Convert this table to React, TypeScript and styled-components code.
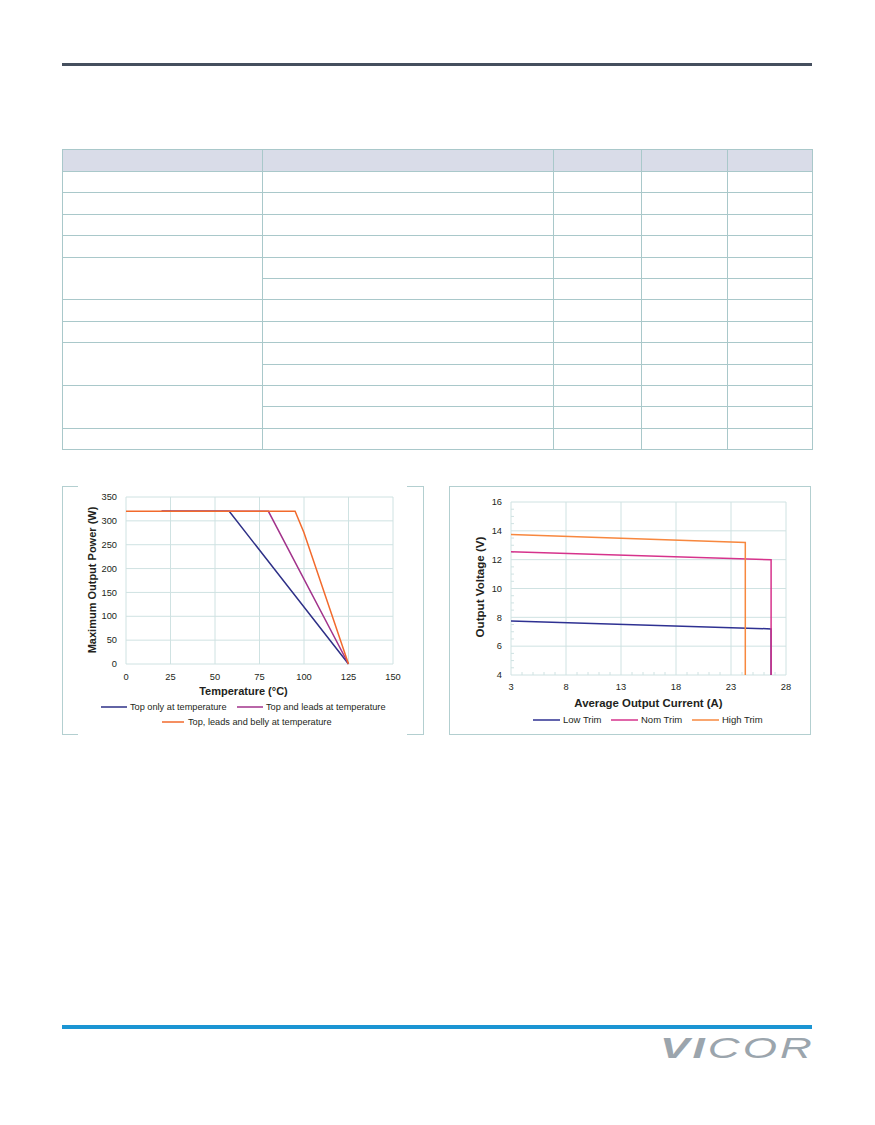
import React from 'react'
import styled, { createGlobalStyle } from 'styled-components'

const GlobalStyle = createGlobalStyle`
  html, body {
    margin: 0;
    padding: 0;
    background: #ffffff;
  }
  body {
    font-family: 'Liberation Sans', Arial, sans-serif;
  }
`

const GRID = '#cfe2e2'
const RULE = '#a9c8ca'
const INK = '#231f20'

const Page = styled.div`
  width: 875px;
  height: 1125px;
  box-sizing: border-box;
  padding: 63px 63px 0 62px;
  display: flex;
  flex-direction: column;
`

const TopRule = styled.div`
  height: 3px;
  background: #454f5e;
`

const SpecTable = styled.table`
  margin-top: 83px;
  width: 750px;
  border-collapse: collapse;
  table-layout: fixed;
`

const Col = styled.col<{ $w: number }>`
  width: ${(p) => p.$w}px;
`

const HeadCell = styled.th`
  height: 21px;
  padding: 0;
  border: 1px solid ${RULE};
  background: #d9dce8;
`

const Cell = styled.td`
  height: 20.4px;
  padding: 0;
  border: 1px solid ${RULE};
`

const ChartRow = styled.div`
  margin-top: 36px;
  display: grid;
  grid-template-columns: 362px 362px;
  column-gap: 25px;
`

const BracketPanel = styled.div`
  height: 249px;
  box-sizing: border-box;
  border-left: 1px solid #b3cfd0;
  border-right: 1px solid #b3cfd0;
  background:
    linear-gradient(#b3cfd0, #b3cfd0) left top / 15px 1px no-repeat,
    linear-gradient(#b3cfd0, #b3cfd0) left bottom / 15px 1px no-repeat,
    linear-gradient(#b3cfd0, #b3cfd0) right top / 16px 1px no-repeat,
    linear-gradient(#b3cfd0, #b3cfd0) right bottom / 16px 1px no-repeat;
`

const BoxPanel = styled.div`
  height: 249px;
  box-sizing: border-box;
  border: 1px solid #b3cfd0;
`

const ChartSvg = styled.svg`
  display: block;
  font-family: 'Liberation Sans', Arial, sans-serif;
`

const TickLabel = styled.text`
  font-size: 9.3px;
  fill: ${INK};
`

const AxisTitle = styled.text<{ $size: number }>`
  font-size: ${(p) => p.$size}px;
  font-weight: bold;
  fill: ${INK};
`

const LegendLabel = styled.text<{ $size: number }>`
  font-size: ${(p) => p.$size}px;
  fill: ${INK};
`

const BottomRule = styled.div`
  margin-top: 290px;
  height: 4px;
  background: #1b95d3;
`

const Logo = styled.div`
  align-self: flex-end;
  margin-top: 5px;
  font-family: 'Liberation Sans', Arial, sans-serif;
  font-style: italic;
  font-size: 29px;
  line-height: 29px;
  letter-spacing: 2px;
  color: #9ba5ad;
  transform: scaleX(1.52);
  transform-origin: right center;
`

const LogoHeavy = styled.span`
  font-weight: 900;
`

const LogoLight = styled.span`
  font-weight: 400;
  margin-right: -2px;
`

const rowGroups = [1, 1, 1, 1, 2, 1, 1, 2, 2, 1]
const colWidths = [200, 291, 88, 86, 85]

const Table = () => (
  <SpecTable>
    <colgroup>
      {colWidths.map((w, i) => (
        <Col key={i} $w={w} />
      ))}
    </colgroup>
    <thead>
      <tr>
        {colWidths.map((_, i) => (
          <HeadCell key={i} />
        ))}
      </tr>
    </thead>
    <tbody>
      {rowGroups.map((span, g) =>
        span === 1 ? (
          <tr key={g}>
            {colWidths.map((_, i) => (
              <Cell key={i} />
            ))}
          </tr>
        ) : (
          <React.Fragment key={g}>
            <tr>
              <Cell rowSpan={2} />
              <Cell />
              <Cell />
              <Cell />
              <Cell />
            </tr>
            <tr>
              <Cell />
              <Cell />
              <Cell />
              <Cell />
            </tr>
          </React.Fragment>
        )
      )}
    </tbody>
  </SpecTable>
)

type Pt = [number, number]

// derating chart: temperature vs max power
const px1 = (t: number) => 63 + (t / 150) * 267
const py1 = (p: number) => 178 - (p / 350) * 167
const path = (pts: Pt[], fx: (v: number) => number, fy: (v: number) => number) =>
  pts.map(([a, b], i) => `${i ? 'L' : 'M'}${fx(a).toFixed(1)} ${fy(b).toFixed(1)}`).join(' ')

const derating: { color: string; pts: Pt[] }[] = [
  { color: '#2e3087', pts: [[20, 320], [58, 320], [125, 0]] },
  { color: '#a2338b', pts: [[20, 320], [80, 320], [125, 0]] },
  { color: '#f26a2c', pts: [[0, 320], [95, 320], [100, 275], [125, 0]] },
]

const DeratingChart = () => (
  <ChartSvg width={360} height={249}>
    {[0, 25, 50, 75, 100, 125, 150].map((t) => (
      <line key={`v${t}`} x1={px1(t)} x2={px1(t)} y1={py1(0)} y2={py1(350)} stroke={GRID} />
    ))}
    {[0, 50, 100, 150, 200, 250, 300, 350].map((p) => (
      <line key={`h${p}`} x1={px1(0)} x2={px1(150)} y1={py1(p)} y2={py1(p)} stroke={GRID} />
    ))}
    {[0, 50, 100, 150, 200, 250, 300, 350].map((p) => (
      <TickLabel key={`yl${p}`} x={54} y={py1(p) + 3.2} textAnchor="end">
        {p}
      </TickLabel>
    ))}
    {[0, 25, 50, 75, 100, 125, 150].map((t) => (
      <TickLabel key={`xl${t}`} x={px1(t)} y={194} textAnchor="middle">
        {t}
      </TickLabel>
    ))}
    {derating.map((s) => (
      <path key={s.color} d={path(s.pts, px1, py1)} fill="none" stroke={s.color} strokeWidth={1.5} />
    ))}
    <AxisTitle $size={11} x={180.5} y={209} textAnchor="middle">
      Temperature (°C)
    </AxisTitle>
    <AxisTitle $size={11} transform="translate(29 94) rotate(-90)" textAnchor="middle" dominantBaseline="central">
      Maximum Output Power (W)
    </AxisTitle>
    <line x1={38} x2={64} y1={221} y2={221} stroke="#2e3087" strokeWidth={1.5} />
    <LegendLabel $size={9.2} x={67} y={224.2}>
      Top only at temperature
    </LegendLabel>
    <line x1={174} x2={200} y1={221} y2={221} stroke="#a2338b" strokeWidth={1.5} />
    <LegendLabel $size={9.2} x={203} y={224.2}>
      Top and leads at temperature
    </LegendLabel>
    <line x1={99} x2={121} y1={236} y2={236} stroke="#f26a2c" strokeWidth={1.5} />
    <LegendLabel $size={9.2} x={125} y={239.2}>
      Top, leads and belly at temperature
    </LegendLabel>
  </ChartSvg>
)

// trim chart: output current vs output voltage
const px2 = (a: number) => 61 + ((a - 3) / 25) * 275
const py2 = (v: number) => 188 - ((v - 4) / 12) * 173

const trims: { label: string; color: string; pts: Pt[]; lx: number }[] = [
  { label: 'Low Trim', color: '#2e3192', pts: [[3, 7.75], [26.65, 7.2], [26.65, 4]], lx: 83 },
  { label: 'Nom Trim', color: '#d6338c', pts: [[3, 12.55], [26.65, 12.0], [26.65, 4]], lx: 161 },
  { label: 'High Trim', color: '#f7883f', pts: [[3, 13.75], [24.3, 13.2], [24.3, 4]], lx: 242 },
]

const xMajor = [3, 8, 13, 18, 23, 28]
const yMajor = [4, 6, 8, 10, 12, 14, 16]
const xMinor = Array.from({ length: 26 }, (_, i) => 3 + i).filter((a) => (a - 3) % 5 !== 0)
const yMinor = Array.from({ length: 25 }, (_, i) => 4 + i * 0.5).filter((v) => v % 2 !== 0)

const TrimChart = () => (
  <ChartSvg width={361} height={247}>
    {xMajor.map((a) => (
      <line key={`v${a}`} x1={px2(a)} x2={px2(a)} y1={py2(4)} y2={py2(16)} stroke={GRID} />
    ))}
    {yMajor.map((v) => (
      <line key={`h${v}`} x1={px2(3)} x2={px2(28)} y1={py2(v)} y2={py2(v)} stroke={GRID} />
    ))}
    {xMinor.map((a) => (
      <line key={`xm${a}`} x1={px2(a)} x2={px2(a)} y1={py2(4)} y2={py2(4) - 3} stroke={GRID} />
    ))}
    {yMinor.map((v) => (
      <line key={`ym${v}`} x1={px2(3)} x2={px2(3) + 3} y1={py2(v)} y2={py2(v)} stroke={GRID} />
    ))}
    {yMajor.map((v) => (
      <TickLabel key={`yl${v}`} x={52} y={py2(v) + 3.2} textAnchor="end">
        {v}
      </TickLabel>
    ))}
    {xMajor.map((a) => (
      <TickLabel key={`xl${a}`} x={px2(a)} y={203} textAnchor="middle">
        {a}
      </TickLabel>
    ))}
    {trims.map((s) => (
      <path key={s.label} d={path(s.pts, px2, py2)} fill="none" stroke={s.color} strokeWidth={1.5} />
    ))}
    <AxisTitle $size={11.4} x={198.5} y={220} textAnchor="middle">
      Average Output Current (A)
    </AxisTitle>
    <AxisTitle $size={11.6} transform="translate(29 100) rotate(-90)" textAnchor="middle" dominantBaseline="central">
      Output Voltage (V)
    </AxisTitle>
    {trims.map((s) => (
      <g key={`lg${s.label}`}>
        <line x1={s.lx} x2={s.lx + 27} y1={233} y2={233} stroke={s.color} strokeWidth={1.5} />
        <LegendLabel $size={9.5} x={s.lx + 30} y={236.3}>
          {s.label}
        </LegendLabel>
      </g>
    ))}
  </ChartSvg>
)

export default function App() {
  return (
    <>
      <GlobalStyle />
      <Page>
        <TopRule />
        <Table />
        <ChartRow>
          <BracketPanel>
            <DeratingChart />
          </BracketPanel>
          <BoxPanel>
            <TrimChart />
          </BoxPanel>
        </ChartRow>
        <BottomRule />
        <Logo>
          <LogoHeavy>VI</LogoHeavy>
          <LogoLight>COR</LogoLight>
        </Logo>
      </Page>
    </>
  )
}
